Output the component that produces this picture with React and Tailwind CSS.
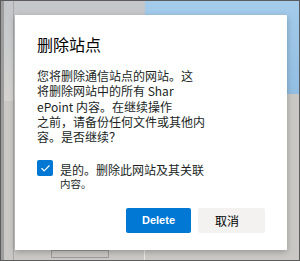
import { Check } from "lucide-react";

const cjk = { fontFamily: '"Noto Sans CJK SC", "Liberation Sans", sans-serif' };

const App = () => {
  return (
    <div className="relative w-[300px] h-[261px] overflow-hidden bg-[#c9c8c5] border border-[#5c5c5c]" style={cjk}>
      {/* blurred page behind the dialog */}
      <div className="absolute left-0 top-0 w-[145px] h-[100px] bg-gradient-to-b from-[#c3c6ca] to-[#d4d3d0]" />
      <div className="absolute left-[144px] top-0 w-[160px] h-[93px] bg-gradient-to-b from-[#a4cbea] to-[#92bee2]" />
      <div className="absolute left-[12px] top-0 w-px h-[261px] bg-[#a9a9a9]" />
      <div className="absolute left-0 top-0 w-[3px] h-[261px] bg-[#9d9d9d]" />
      <div className="absolute left-[50px] top-[249px] w-[58px] h-[8px] border border-[#9a9a9a]" />
      <div className="absolute left-[143px] top-[249px] w-px h-[12px] bg-[#e8e8e8]" />

      <div className="absolute left-[14px] top-[14px] w-[272px] h-[235px] bg-white shadow-[0_2px_6px_rgba(0,0,0,0.25)] px-[22px] pt-[19px] flex flex-col">
        <h1 className="text-[16px] leading-[20px] text-black font-normal">删除站点</h1>

        <div className="mt-[14px] text-[12px] leading-[15.25px] text-[#201f1e]">
          <div>您将删除通信站点的网站。这</div>
          <div>将删除网站中的所有 Shar</div>
          <div>ePoint 内容。在继续操作</div>
          <div>之前，请备份任何文件或其他内</div>
          <div>容。是否继续？</div>
        </div>

        <div className="mt-[16px] flex items-start gap-[7px]">
          <div className="w-[16px] h-[16px] rounded-[2px] bg-[#0078d4] flex items-center justify-center shrink-0">
            <Check size={11} strokeWidth={2.5} color="white" />
          </div>
          <div className="mt-[3px] text-[#201f1e]">
            <div className="text-[12px] leading-[14px]">是的。删除此网站及其关联</div>
            <div className="text-[10.5px] leading-[14px]">内容。</div>
          </div>
        </div>

        <div className="mt-auto mb-[17px] flex justify-end gap-[7px]">
          <button
            className="w-[65px] h-[25px] rounded-[2px] bg-[#0078d4] text-white text-[11px] font-bold"
            style={{ fontFamily: '"Liberation Sans", sans-serif' }}
          >
            Delete
          </button>
          <button className="w-[67px] h-[25px] rounded-[2px] bg-[#f3f2f1] text-black text-[12px] pr-[9px]">
            取消
          </button>
        </div>
      </div>
    </div>
  );
};

export default App;
